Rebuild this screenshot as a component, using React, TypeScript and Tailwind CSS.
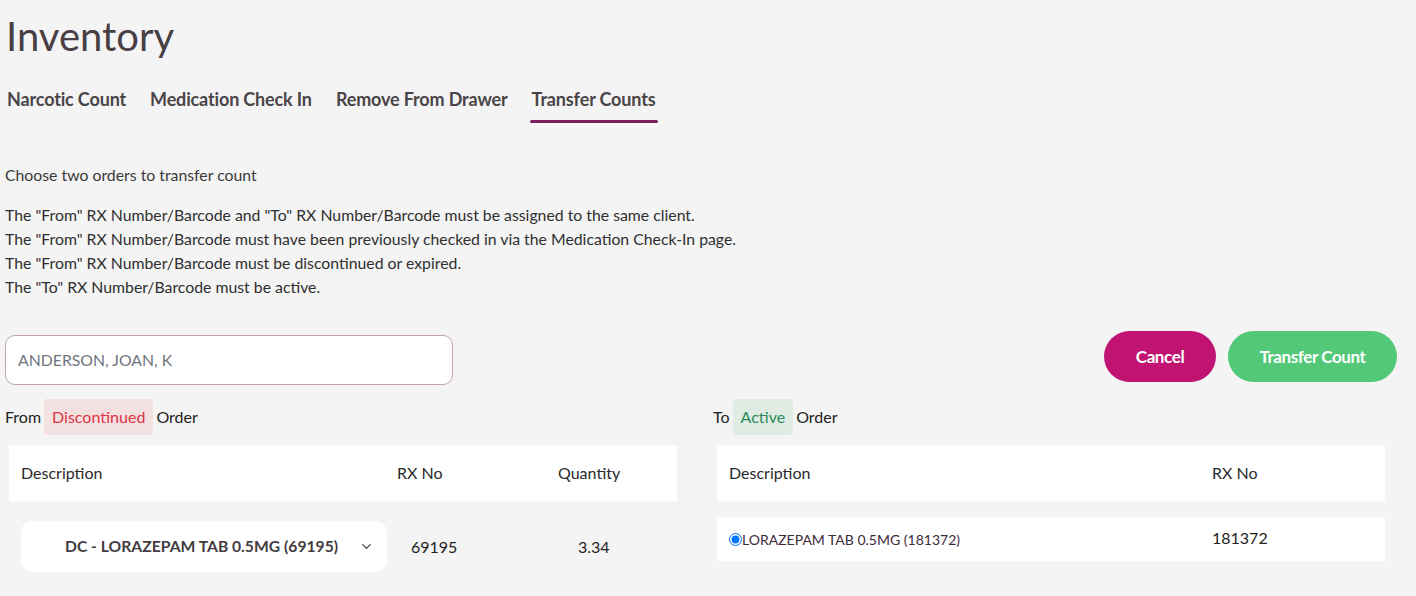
import { ChevronDown } from "lucide-react";

const tabs = ["Narcotic Count", "Medication Check In", "Remove From Drawer", "Transfer Counts"];

const rules = [
  'The "From" RX Number/Barcode and "To" RX Number/Barcode must be assigned to the same client.',
  'The "From" RX Number/Barcode must have been previously checked in via the Medication Check-In page.',
  'The "From" RX Number/Barcode must be discontinued or expired.',
  'The "To" RX Number/Barcode must be active.',
];

export default function App() {
  return (
    <div
      className="min-h-screen bg-[#f4f4f4] text-[#333] pl-[5px] pr-[19px]"
      style={{ fontFamily: "Lato, 'Open Sans', sans-serif" }}
    >
      {/* Page title */}
      <h1 className="pt-[10px] text-[40px] leading-[52px] text-[#483f44] pl-[1px]">Inventory</h1>

      {/* Tabs */}
      <nav className="mt-[24px] flex gap-[24px] pl-[2px]">
        {tabs.map((t) => (
          <div key={t} className="flex flex-col">
            <span className="text-[18px] font-bold leading-[26px] text-[#4a4548] tracking-[-0.15px]">{t}</span>
            <span
              className={
                t === "Transfer Counts"
                  ? "mt-[8px] h-[3px] rounded-full bg-[#7d1f5d] -mx-[2px]"
                  : "mt-[8px] h-[3px]"
              }
            />
          </div>
        ))}
      </nav>

      {/* Instructions */}
      <p className="mt-[41px] text-[15.8px] leading-[22px] text-[#3a3a3a]">Choose two orders to transfer count</p>
      <div className="mt-[17px] text-[15.8px] leading-[24px] text-[#2f2f2f]">
        {rules.map((r) => (
          <p key={r}>{r}</p>
        ))}
      </div>

      {/* Client search + actions */}
      <div className="mt-[32px] flex items-start justify-between">
        <div className="mt-[4px] h-[50px] w-[448px] rounded-[10px] border border-[#bfa2b4] bg-white px-[12px] flex items-center">
          <span className="text-[15.8px] text-[#6f767d]">ANDERSON, JOAN, K</span>
        </div>
        <div className="flex gap-[12px]">
          <button className="h-[51px] w-[112px] rounded-full bg-[#c11372] text-white text-[17px] font-bold tracking-[-0.4px]">
            Cancel
          </button>
          <button className="h-[51px] w-[169px] rounded-full bg-[#52c878] text-white text-[17px] font-bold tracking-[-0.4px]">
            Transfer Count
          </button>
        </div>
      </div>

      {/* From / To columns */}
      <div className="mt-[14px] flex gap-[16px]">
        {/* From */}
        <div className="w-[692px]">
          <div className="flex items-center h-[36px] text-[16px] text-[#222]">
            <span>From</span>
            <span className="mx-[3px] h-[36px] px-[8px] flex items-center rounded-[3px] bg-[#f3e0e1] text-[#dc3545]">
              Discontinued
            </span>
            <span>Order</span>
          </div>
          <div className="mt-[10px] ml-[4px] w-[668px] h-[56px] bg-white flex items-center text-[16px] text-[#2a2a2a]">
            <span className="pl-[12px] w-[388px]">Description</span>
            <span className="w-[161px]">RX No</span>
            <span>Quantity</span>
          </div>
          <div className="mt-[20px] ml-[16px] flex items-center">
            <div className="h-[51px] w-[366px] rounded-[12px] bg-white flex items-center pl-[44px] pr-[13px] justify-between">
              <span className="text-[15.7px] font-bold text-[#433c40]">
                DC - LORAZEPAM TAB 0.5MG (69195)
              </span>
              <ChevronDown size={15} strokeWidth={2} className="text-[#444]" />
            </div>
            <span className="ml-[24px] w-[167px] text-[16px] text-[#222]">69195</span>
            <span className="text-[16px] text-[#222]">3.34</span>
          </div>
        </div>

        {/* To */}
        <div className="flex-1">
          <div className="flex items-center h-[36px] text-[16px] text-[#222]">
            <span>To</span>
            <span className="mx-[3px] h-[36px] px-[8px] flex items-center rounded-[3px] bg-[#e0ebe4] text-[#2a8a57]">
              Active
            </span>
            <span>Order</span>
          </div>
          <div className="mt-[10px] ml-[4px] w-[668px] h-[56px] bg-white flex items-center text-[16px] text-[#2a2a2a]">
            <span className="pl-[12px] w-[495px]">Description</span>
            <span>RX No</span>
          </div>
          <div className="mt-[16px] ml-[4px] w-[668px] h-[44px] bg-white flex items-start text-[#222]">
            <label className="pl-[12px] w-[495px] pt-[12px] flex items-center text-[14px] text-[#3e2a3a]">
              <input type="radio" checked readOnly className="m-0 h-[13px] w-[13px]" />
              <span>LORAZEPAM TAB 0.5MG (181372)</span>
            </label>
            <span className="pt-[9px] text-[16px]">181372</span>
          </div>
        </div>
      </div>
    </div>
  );
}
